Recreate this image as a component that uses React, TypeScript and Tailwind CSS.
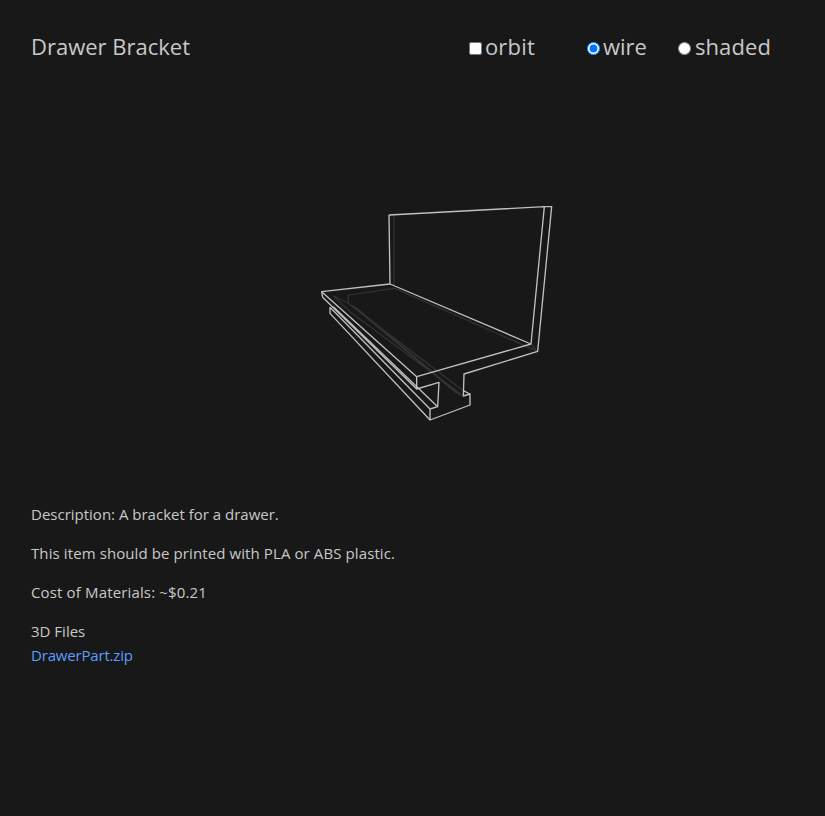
const bright = [
  'M267 75L733 50H755L713 484L492 552L490 618L510 612V645L390 690V657L413 650L417 577L350 597V560L693 462L733 50',
  'M267 75L270 282L693 462',
  'M270 282L65 305L350 560',
  'M65 305L68 322L350 597',
  'M90 352V370L390 690',
  'M90 352L390 657',
  'M100 350L413 650',
  'M490 602L510 612',
]

const faint = [
  'M282 75V285',
  'M145 315L285 295L713 484',
  'M145 315V340L490 602',
  'M100 318L150 365L490 618',
  'M145 340L100 318',
  'M155 345L470 610',
  'M165 350L480 615',
  'M693 462L713 484',
]

const Bracket = () => (
  <svg viewBox="0 0 810 720" className="h-[240px] w-[270px]" fill="none">
    {faint.map((d) => (
      <path key={d} d={d} stroke="#333333" strokeWidth="3.6" />
    ))}
    {bright.map((d) => (
      <path key={d} d={d} stroke="#c0c0c0" strokeWidth="4" strokeLinejoin="round" />
    ))}
  </svg>
)

export default function App() {
  return (
    <div className="min-h-[816px] bg-[#181818] px-[31px] font-['Open_Sans',sans-serif] text-[#c8c8c8]">
      <header className="flex h-[92px] items-center justify-between text-[22px]">
        <h1>Drawer Bracket</h1>
        <div className="mr-[23px] flex items-center">
          <label className="mr-[52px] flex items-center tracking-[0.2px]">
            <input type="checkbox" className="mt-[4px] mr-[3px] h-[13px] w-[13px]" />
            orbit
          </label>
          <label className="mr-[31px] flex items-center">
            <input type="radio" name="view" defaultChecked className="mt-[4px] mr-[3px] h-[13px] w-[13px]" />
            wire
          </label>
          <label className="flex items-center tracking-[0.1px]">
            <input type="radio" name="view" className="mt-[4px] mr-[4px] h-[13px] w-[13px]" />
            shaded
          </label>
        </div>
      </header>
      <div className="flex h-[386px] justify-center pt-[98px] pl-[45px]">
        <Bracket />
      </div>
      <div className="flex flex-col gap-[15px] pt-[24px] text-[15px] leading-[24px]">
        <p>Description: A bracket for a drawer.</p>
        <p className="tracking-[0.1px]">This item should be printed with PLA or ABS plastic.</p>
        <p className="tracking-[0.15px]">Cost of Materials: ~$0.21</p>
        <div>
          <p>3D Files</p>
          <a href="#" className="tracking-[-0.18px] text-[#5c9dff]">DrawerPart.zip</a>
        </div>
      </div>
    </div>
  )
}
